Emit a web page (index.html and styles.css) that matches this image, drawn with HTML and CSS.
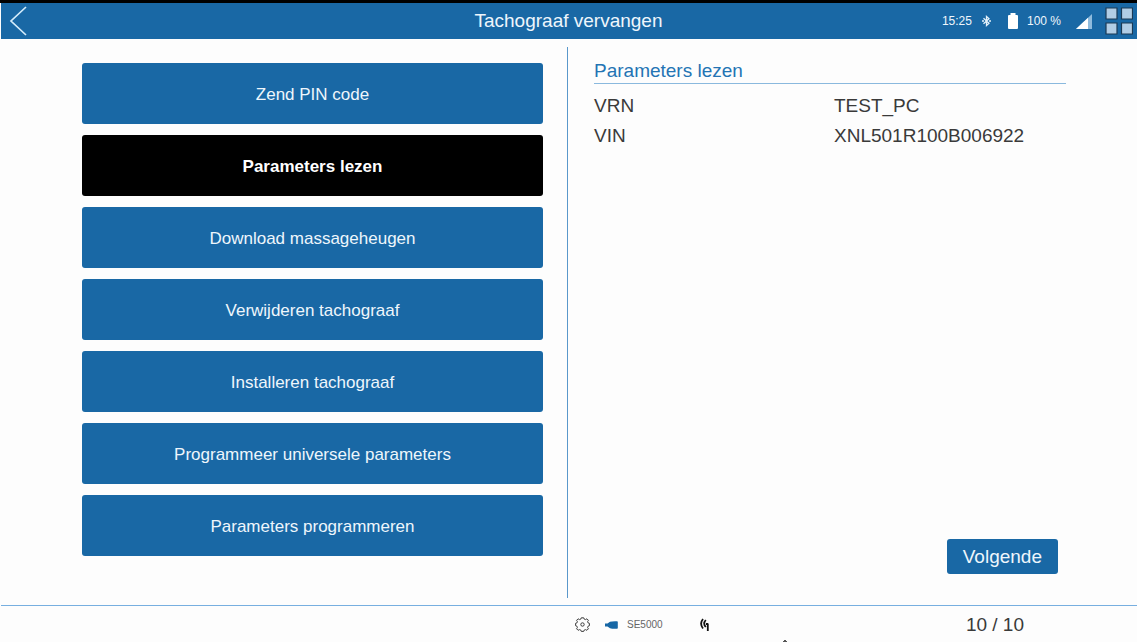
FILE: index.html
```html
<!DOCTYPE html>
<html lang="nl">
<head>
<meta charset="UTF-8" />
<meta name="viewport" content="width=device-width, initial-scale=1.0">
<title>Tachograaf vervangen</title>
<link rel="stylesheet" href="styles.css">
</head>
<body>
  <header class="topbar">
    <button class="icon-button back" aria-label="Terug">
      <svg width="18" height="30" viewBox="0 0 18 30" fill="none" stroke="#d3ebfa" stroke-width="1.7"><path d="M17 1 2 15l15 14"/></svg>
    </button>
    <h1>Tachograaf vervangen</h1>
    <div class="system">
      <span>15:25</span>
      <svg class="bluetooth" width="9" height="12" viewBox="0 0 9 12" fill="none" stroke="#e4f1fa" stroke-width="1.3"><path d="M1.500 3.200 7 8.300 4.500 10.500V1.500L7 3.700 1.500 8.800M0 6h2M7 6h2"/></svg>
      <svg class="battery" width="10" height="16" viewBox="0 0 10 16" fill="#fff"><path d="M2.500 0h5v2H9q1 0 1 1v12q0 1-1 1H1q-1 0-1-1V3q0-1 1-1h1.500z"/></svg>
      <span>100 %</span>
      <svg class="signal" width="16" height="15" viewBox="0 0 16 15"><path d="M16 0v15H0z" fill="#8fbbdd"/><path d="M12 3.750V15H0z" fill="#fff"/></svg>
      <button class="icon-button" aria-label="Menu">
        <svg width="28" height="28" viewBox="0 0 28 28" fill="#b1cde5" stroke="#1c3a55" stroke-width="1.2"><path d="M1 1h11v11H1zM16.500 1h11v11h-11zM1 16h11v11H1zM16.500 16h11v11h-11z"/></svg>
      </button>
    </div>
  </header>

  <main>
    <nav class="steps">
      <button>Zend PIN code</button>
      <button class="active" aria-current="step">Parameters lezen</button>
      <button>Download massageheugen</button>
      <button>Verwijderen tachograaf</button>
      <button>Installeren tachograaf</button>
      <button>Programmeer universele parameters</button>
      <button>Parameters programmeren</button>
    </nav>
    <section class="details">
      <h2>Parameters lezen</h2>
      <dl>
        <dt>VRN</dt><dd>TEST_PC</dd>
        <dt>VIN</dt><dd>XNL501R100B006922</dd>
      </dl>
      <button class="next">Volgende</button>
    </section>
  </main>

  <footer>
    <div class="device">
      <svg class="gear" width="15" height="15" viewBox="-7.5 -7.5 15 15" fill="none" stroke="#3c3c3c"><path d="M-1.200-6.700h2.400l.5 1.300 1.300.5 1.400-.8 1.500 1.500-.8 1.400.5 1.200 1.300.4v2.400l-1.300.5-.5 1.200.8 1.400-1.500 1.500-1.400-.7-1.300.5-.5 1.300h-2.400l-.5-1.300-1.300-.5-1.400.7-1.500-1.500.8-1.400-.5-1.200-1.300-.5v-2.400l1.300-.4.5-1.200-.8-1.400 1.500-1.500 1.400.8 1.300-.5z"/><circle r="1.700"/></svg>
      <svg class="plug" width="13" height="8" viewBox="0 0 13 8" fill="#1767a5"><path d="M0 2.500h2.500L5 .8Q7 0 12 .2q.8 0 .8.8v6q0 .8-.8.8-5 .2-7-.6L2.500 5.500H0z"/></svg>
      <span>SE5000</span>
      <svg class="antenna" width="10" height="14" viewBox="0 0 10 14" fill="none" stroke="#111" stroke-width="1.8"><path d="M3 1Q-.8 5.500 3 10.500M5.800 2Q2.600 5.500 5.800 9M7.800 5.500V13M6 6h2"/></svg>
    </div>
    <svg class="mark" width="4" height="2" viewBox="0 0 4 2" fill="#555"><path d="M1 0h2v1h1v1H0V1h1z"/></svg>
    <span class="pages">10 / 10</span>
  </footer>
</body>
</html>
```
FILE: styles.css
```css
* {
  box-sizing: border-box;
}
body {
  margin: 0;
  min-height: 100vh;
  display: flex;
  flex-direction: column;
  border-top: 3px solid #000;
  padding-left: 1px;
  background-color: #fdfdfd;
  color: #3a3a3a;
  font-family: "Liberation Sans", Arial, sans-serif;
  font-size: 19px;
}
button {
  border: none;
  border-radius: 3px;
  background-color: #1968a5;
  color: #eef6fc;
  font-family: inherit;
  font-size: 17px;
  cursor: pointer;
}
h1, h2, dl, dd {
  margin: 0;
  font-size: 19px;
  font-weight: normal;
}

/* Top bar */
.topbar {
  display: grid;
  grid-template-columns: 1fr auto 1fr;
  align-items: center;
  height: 36px;
  padding: 0 4px 0 3px;
  background-color: #1968a5;
  color: #eef6fc;
}
.icon-button {
  display: flex;
  padding: 0;
  background: none;
}
.back {
  justify-self: start;
  padding-left: 5px;
}
.system {
  display: flex;
  justify-content: flex-end;
  align-items: center;
  font-size: 12px;
}
.bluetooth {
  margin: 0 17px 0 10px;
}
.battery {
  margin-right: 9px;
}
.signal {
  margin: 0 13px 0 15px;
}

/* Content */
main {
  flex: 1;
  display: grid;
  grid-template-columns: 1fr 1fr;
  padding: 8px 2px 7px 0;
}
.steps {
  display: flex;
  flex-direction: column;
  gap: 11px;
  padding: 16px 24px 16px 81px;
  border-right: 1px solid #5a98cb;
}
.steps button {
  height: 61px;
  padding-top: 3px;
}
.steps .active {
  background-color: #000;
  color: #fff;
  font-weight: bold;
}
.details {
  display: flex;
  flex-direction: column;
  padding: 12px 69px 24px 26px;
}
h2 {
  padding-bottom: 1px;
  border-bottom: 1px solid #8ab9de;
  color: #2474b4;
  line-height: 23px;
}
dl {
  display: grid;
  grid-template-columns: 240px 1fr;
  padding-top: 7px;
  line-height: 30px;
}
.next {
  align-self: flex-end;
  margin: auto 8px 0 0;
  padding: 0 16px;
  height: 35px;
  font-size: 19px;
}

/* Status bar */
footer {
  display: flex;
  align-items: center;
  justify-content: space-between;
  height: 37px;
  padding: 1px 113px 0 50%;
  border-top: 1px solid #77afe0;
}
.device {
  display: flex;
  align-items: center;
  padding-left: 6px;
  color: #666;
  font-size: 10px;
}
.plug {
  margin: 0 9px 0 15px;
}
.antenna {
  margin-left: 37px;
}
.mark {
  align-self: flex-end;
  margin: 0 auto 0 73px;
}
```
